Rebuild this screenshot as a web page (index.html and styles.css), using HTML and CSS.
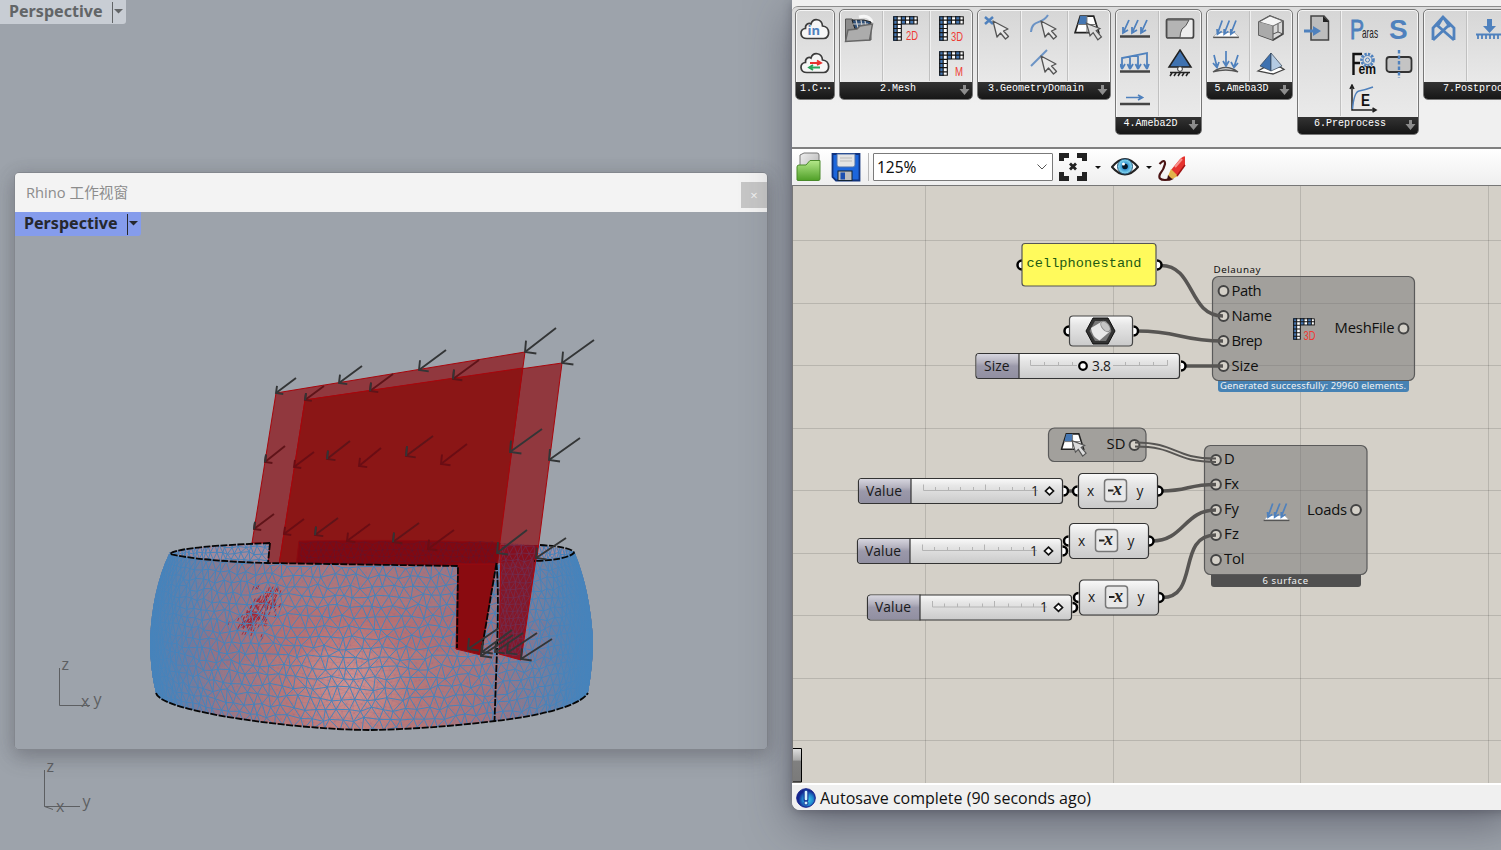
FILE: index.html
```html
<!DOCTYPE html>
<html lang="en">
<head>
<meta charset="utf-8">
<title>Rhino and Grasshopper</title>
<link rel="stylesheet" href="styles.css">
</head>
<body>
<svg class="defs" width="0" height="0">
  <defs>
    <linearGradient id="gBody" x1="0" y1="0" x2="0" y2="1"><stop offset="0" stop-color="#fafafa"/><stop offset=".3" stop-color="#e6e6e6"/><stop offset="1" stop-color="#cacaca"/></linearGradient>
    <linearGradient id="gName" x1="0" y1="0" x2="0" y2="1"><stop offset="0" stop-color="#d6d5de"/><stop offset=".35" stop-color="#b3b1be"/><stop offset=".5" stop-color="#9b99aa"/><stop offset="1" stop-color="#918fa1"/></linearGradient>
    <linearGradient id="gPaper" x1="0" y1="0" x2="1" y2="1"><stop offset="0" stop-color="#eee"/><stop offset="1" stop-color="#aaa"/></linearGradient>
    <linearGradient id="gGreen" x1="0" y1="0" x2="0" y2="1"><stop offset="0" stop-color="#b4e88a"/><stop offset="1" stop-color="#4f9f27"/></linearGradient>
    <radialGradient id="gIris"><stop offset=".2" stop-color="#0b2c4e"/><stop offset=".35" stop-color="#2f8fd0"/><stop offset="1" stop-color="#8fe0f2"/></radialGradient>
    <radialGradient id="gInfo" cx=".6" cy=".6"><stop offset="0" stop-color="#35d0ea"/><stop offset=".55" stop-color="#2288cf"/><stop offset="1" stop-color="#12258f"/></radialGradient>
    <radialGradient id="gShell" gradientUnits="userSpaceOnUse" cx="350" cy="684" r="215"><stop offset="0" stop-color="#d29391"/><stop offset=".3" stop-color="#b97877"/><stop offset=".65" stop-color="#a3747d"/><stop offset="1" stop-color="#7f8097"/></radialGradient>
    <linearGradient id="gSides" x1="0" y1="0" x2="1" y2="0"><stop offset="0" stop-color="#4683bb"/><stop offset=".03" stop-color="#4683bb" stop-opacity=".85"/><stop offset=".14" stop-color="#4683bb" stop-opacity=".2"/><stop offset=".3" stop-color="#4683bb" stop-opacity="0"/><stop offset=".75" stop-color="#4683bb" stop-opacity="0"/><stop offset=".88" stop-color="#4683bb" stop-opacity=".25"/><stop offset=".96" stop-color="#4683bb" stop-opacity=".9"/><stop offset="1" stop-color="#4683bb"/></linearGradient>
    <linearGradient id="gMark" x1="0" y1="0" x2="0" y2="1"><stop offset="0" stop-color="#e0e0e0"/><stop offset=".35" stop-color="#a8a8a8"/><stop offset=".37" stop-color="#808080"/><stop offset="1" stop-color="#7a7a7a"/></linearGradient>

    <symbol id="cursor" viewBox="0 0 18 20"><path d="M1 1L5 17L8.500 13L13.500 19L16.500 16.500L11.500 11L16 9Z" fill="#e9e9e9" stroke="#555" stroke-width="1.300" stroke-linejoin="round"/></symbol>
    <symbol id="meshL" viewBox="0 0 24 24">
      <path d="M0 0H24V8H8V24H0Z" fill="#fff"/>
      <path d="M0 0H4V24H0ZM8 0H12V8H8ZM16 0H20V8H16Z" fill="#4577b3"/>
      <path d="M.7 .7H23.300V7.700H8V23.300H.7ZM4 0V24M8 0V8M12 0V8M16 0V8M20 0V8M0 4H24M0 8H8M0 12H8M0 16H8M0 20H8" fill="none" stroke="#151515" stroke-width="1.100"/>
    </symbol>
    <symbol id="cloud" viewBox="0 0 30 22"><path d="M7 20.500C-1 20.500-.5 10.500 5.500 10.500C5 6 9 4.500 11 6C13-.5 22 .5 22.500 8C30.500 8.500 30.500 20.500 23.500 20.500Z" fill="#f6f6f6" stroke="#3c3c3c" stroke-width="1.700"/></symbol>
    <symbol id="patch" viewBox="0 0 28 26">
      <path d="M6 2H19L24 18H1Z" fill="#fff" stroke="#222" stroke-width="1.600"/><path d="M6 2H12.500V10H4Z" fill="#4577b3"/><path d="M12.500 2V18M3.500 10H21.500" stroke="#777" stroke-width="1"/>
      <path d="M12 9L15.500 21L18.500 18L23 25L26.500 22L21.500 16L25 14Z" fill="#dcdcdc" stroke="#555" stroke-width="1.200"/>
    </symbol>
    <symbol id="surfLoad" viewBox="0 0 30 20"><path d="M6 13.500H23L28 18.500H1Z" fill="#fff" stroke="#999" stroke-width=".8"/><path d="M1 19H28" stroke="#555" stroke-width="1.700"/><path d="M10.500 1L5.500 15M5 10L5.500 15.500L10 12.500M18 1L12.500 15M12.500 10L12.500 15.500L17 12.500M25 1L19.500 15M19.500 10L19.500 15.500L24 12.500" fill="none" stroke="#4f81bd" stroke-width="1.800"/></symbol>
    <symbol id="down" viewBox="0 0 11 12"><path d="M4 1H7V5H10.500L5.500 11L.5 5H4Z" fill="#8c8c8c"/></symbol>

    <g id="portL"><path d="M0 -4.500A4.500 4.500 0 0 0 0 4.500" fill="#fff" stroke="#000" stroke-width="2.500"/></g>
    <g id="portR"><path d="M0 -4.500A4.500 4.500 0 0 1 0 4.500" fill="#fff" stroke="#000" stroke-width="2.500"/></g>
    <circle id="ring" r="4.900" fill="#d4d0c8" stroke="#444" stroke-width="2"/>
    <g id="valueSlider">
      <use href="#portR" x="205.500" y="13"/>
      <rect x=".5" y=".5" width="204" height="25" rx="3" fill="url(#gBody)" stroke="#333" stroke-width="1.200"/>
      <path d="M53 1H4Q1 1 1 4V22Q1 25 4 25H53Z" fill="url(#gName)"/>
      <path d="M53 0V26" stroke="#333" stroke-width="1.200"/>
      <path d="M65.500 6.500V12.500H180M77.500 9V12.500M90.500 9V12.500M102.500 9V12.500M115.500 9V12.500M127.500 6.500V12.500M141.500 9V12.500M154.500 9V12.500M166.500 9V12.500" fill="none" stroke="#b4b4b4"/>
      <text x="8" y="17.500" class="node-text" textLength="36">Value</text>
      <text x="173" y="17.500" class="node-text">1</text>
      <path d="M191.500 9.200L195.500 13L191.500 16.800L187.500 13Z" fill="#fff" stroke="#111" stroke-width="1.700"/>
    </g>
    <g id="negate">
      <use href="#portL" x="-.5" y="18"/><use href="#portR" x="80" y="18"/>
      <rect x=".5" y=".5" width="79" height="35" rx="4" fill="url(#gBody)" stroke="#333" stroke-width="1.200"/>
      <rect x="26.500" y="6.500" width="22" height="22" rx="3" fill="#e8e8e8" stroke="#777" stroke-width="1.500"/>
      <text x="9" y="22.500" class="node-text">x</text><text x="58.500" y="22.500" class="node-text">y</text>
      <path d="M30 17.500H35.500" stroke="#222" stroke-width="2"/><text x="35" y="22" class="neg-x">x</text>
    </g>
  </defs>
</svg>

<div class="desktop">
  <div class="view-tag back-tag"><span class="tag-name">Perspective</span><svg class="tag-arrow" width="14" height="24"><path d="M.5 2V23" stroke="currentColor"/><path d="M2 9H11L6.500 13.500Z" fill="currentColor"/></svg></div>
  <svg class="axes" width="70" height="60" viewBox="35 755 70 60">
    <path d="M44.500 770V806.500L80 806.500M44.500 806.500L53 809.500" fill="none" stroke="#5d5f62"/>
    <text x="46.500" y="772" class="axis">z</text><text x="56" y="811.500" class="axis">x</text><text x="82.500" y="806.500" class="axis">y</text>
  </svg>

  <section class="rhino">
    <header class="rhino-head"><span class="rhino-title">Rhino 工作视窗</span><span class="close">×</span></header>
    <div class="viewport">
      <div class="view-tag live-tag"><span class="tag-name">Perspective</span><svg class="tag-arrow" width="14" height="24"><path d="M.5 2V23" stroke="currentColor"/><path d="M2 9H11L6.500 13.500Z" fill="currentColor"/></svg></div>
      <svg class="scene" viewBox="15 212 752 537" width="752" height="537">
        <defs>
          <clipPath id="frontClip"><path d="M169 554Q200 561 267 563L458 566L456 649L482 655L496 565L499 563Q560 559 575 553Q590 590 593 640Q593 665 588 693C575 713 495 721 495 721Q430 729 370 730C300 730 160 712 156 693Q150 670 150 640Q152 590 169 554Z"/></clipPath>
          <clipPath id="rimClip"><path d="M169 553C180 548 220 545 270 543L268 563Q200 561 169 553ZM299 541Q540 538 575 552Q565 560 499 563L458 566L268 563L299 563Z"/></clipPath>
        </defs>
        <path d="M169 553C180 548 220 545 270 543L268 563Q200 561 169 553ZM299 541Q540 538 575 552Q565 560 499 563L458 566L268 563L299 563Z" fill="#a2899b"/>
        <g clip-path="url(#rimClip)"><path class="mesh" id="rimMesh"/></g>
        <g stroke="#a8060c" stroke-width="1">
          <path d="M252 543L276 393L525 352L496 566H268L270 543Z" fill="#8b0a10" fill-opacity=".7"/>
          <path d="M279 565L305 400L562 363L536 565Z" fill="#8b0a10" fill-opacity=".7"/>
          <path d="M279 565L305 400L522.500 368L497 565Z" fill="#8b1616"/>
        </g>
        <path d="M299 541Q420 539 500 543L497 567H296Z" fill="#820810" stroke="#8c0a10"/>
        <path class="mesh-strip" id="stripMesh"/>
        <g clip-path="url(#frontClip)">
          <rect x="145" y="540" width="455" height="195" fill="url(#gShell)"/>
          <path d="M170 660Q330 600 590 650" fill="none" stroke="#b9424a" stroke-opacity=".1" stroke-width="44"/>
          <path class="mesh-back" id="backMesh"/>
          <path class="streak" id="streak"/>
          <path class="mesh" id="frontMesh"/>
          <rect x="150" y="540" width="443" height="195" fill="url(#gSides)"/>
        </g>
        <path d="M458 564H496L481 655L456 649Z" fill="#8a0b10" stroke="#9b080e"/>
        <path d="M501 545L499 654L521 660L538 545Z" fill="#850c1c" fill-opacity=".9"/>
        <path class="mesh-leg" id="legMesh"/>
        <path d="M501 545L499 654L521 660L538 545" fill="none" stroke="#b0060c"/>
        <g class="edge">
          <path d="M270 543C220 545 175 548 170 554Q200 561 267 563L458 566L457 648M270 543L268 563"/>
          <path d="M540 545Q573 547 574 553Q566 560 534 561"/>
          <path d="M156 693C160 712 300 730 370 730Q430 729 495 721C495 721 575 713 588 693"/>
          <path d="M496.500 563L482 648M496.500 563Q499 590 497 650L494.500 721"/>
        </g>
        <g id="arrows"></g>
        <path d="M59.500 668V705.500H90" fill="none" stroke="#5d5f62"/>
        <text x="61.500" y="670" class="axis">z</text><text x="81" y="706.500" class="axis">x</text><text x="93.500" y="705" class="axis">y</text>
      </svg>
    </div>
  </section>

  <section class="gh">
    <div class="ribbon">
      <div class="group slim">
        <div class="cols"><div class="col">
          <svg class="ico" viewBox="0 0 30 30"><use href="#cloud" x="0" y="4" width="30" height="22"/><text x="7.500" y="21" class="ico-in">in</text></svg>
          <svg class="ico" viewBox="0 0 30 30"><use href="#cloud" x="0" y="3" width="30" height="22"/><path d="M10 14H20M17 11.500L21 14L17 16" stroke="#e8322f" stroke-width="1.800" fill="none"/><path d="M20 18.500H10M13 16L9 18.500L13 21" stroke="#2aa35a" stroke-width="1.800" fill="none"/></svg>
        </div></div>
        <div class="cap"><span>1.C<b class="dots">···</b></span></div>
      </div>
      <div class="group">
        <div class="cols">
          <div class="col c42"><svg class="ico" viewBox="0 0 30 30"><path d="M1.500 26V5H8L10 8H27V26Z" fill="#8c8c8c" stroke="#555"/><path d="M15 3Q25 0 28 8" stroke="#fff" stroke-opacity=".8" stroke-width="3" fill="none"/><path d="M8 6H20L27 8L24 13L11 15Z" fill="#31527a" stroke="#222"/><path d="M12 6L14 14M17 6L18 12M21 7L22 12M9 10H24" stroke="#ccc" stroke-width="1.200"/><path d="M1.500 27.500L4 16L13 15L16 12L28.500 10L25.500 26Z" fill="#acacac" stroke="#666" stroke-width="1.400"/></svg></div>
          <div class="col c47"><svg class="ico" viewBox="0 0 30 30"><use href="#meshL" x="2" y="2" width="25" height="25"/><text x="15" y="26" class="ico-red" textLength="12" lengthAdjust="spacingAndGlyphs">2D</text></svg></div>
          <div class="col">
            <svg class="ico" viewBox="0 0 30 30"><use href="#meshL" x="3" y="2" width="25" height="25"/><text x="15" y="27" class="ico-red" textLength="12" lengthAdjust="spacingAndGlyphs">3D</text></svg>
            <svg class="ico" viewBox="0 0 30 30"><use href="#meshL" x="3" y="2" width="25" height="25"/><text x="19" y="27" class="ico-red" textLength="8" lengthAdjust="spacingAndGlyphs">M</text></svg>
          </div>
        </div>
        <div class="cap"><span>2.Mesh</span><svg class="more"><use href="#down"/></svg></div>
      </div>
      <div class="group">
        <div class="cols">
          <div class="col c42"><svg class="ico" viewBox="0 0 30 30"><path d="M3 3L11 10M11 3L3 10" stroke="#4f81bd" stroke-width="2.500"/><use href="#cursor" x="10" y="6" width="18" height="20"/></svg></div>
          <div class="col c47">
            <svg class="ico" viewBox="0 0 30 30"><path d="M2 18C3 5 13 11 19 1" fill="none" stroke="#6b93c5" stroke-width="2"/><use href="#cursor" x="11" y="6" width="18" height="20"/></svg>
            <svg class="ico" viewBox="0 0 30 30"><path d="M2 17L18 1" stroke="#6b93c5" stroke-width="2"/><use href="#cursor" x="11" y="6" width="18" height="20"/></svg>
          </div>
          <div class="col"><svg class="ico" viewBox="0 0 30 30"><use href="#patch" x="0" y="0" width="29" height="27"/></svg></div>
        </div>
        <div class="cap"><span>3.GeometryDomain</span><svg class="more"><use href="#down"/></svg></div>
      </div>
      <div class="group two">
        <div class="cols">
          <div class="col c42">
            <svg class="ico" viewBox="0 0 30 30"><path d="M0 22.500H30" stroke="#444" stroke-width="2.600"/><path d="M9 6L3.500 18M3 13L3 19L8 16M18 6L12.500 18M12 13L12 19L17 16M27 6L21.500 18M21 13L21 19L26 16" fill="none" stroke="#4f81bd" stroke-width="1.800"/></svg>
            <svg class="ico" viewBox="0 0 30 30"><path d="M0 22.500H30" stroke="#444" stroke-width="2.600"/><path d="M2 20V9L27 4V20M2 20L0 15M2 20L5 15M10 8V20L7.500 15M10 20L13 15M18 6V20L15.500 15M18 20L21 15M27 20L24 15M27 20L29 15" fill="none" stroke="#4f81bd" stroke-width="1.800"/></svg>
            <svg class="ico" viewBox="0 0 30 30"><path d="M0 20H30" stroke="#444" stroke-width="2.600"/><path d="M6 13.500H22M18 11L22.500 13.500L18 16" fill="none" stroke="#4f81bd" stroke-width="1.700"/></svg>
          </div>
          <div class="col">
            <svg class="ico" viewBox="0 0 30 30"><rect x="1.500" y="5" width="27" height="19" rx="2" fill="#eee" stroke="#444" stroke-width="1.700"/><path d="M2 6H24Q21 13 17 15Q15 19 15 23.500H2Z" fill="#b4b4b4" stroke="#555"/></svg>
            <svg class="ico" viewBox="0 0 30 30"><path d="M15 1L26 18H4Z" fill="#3f72b0" stroke="#222" stroke-width="1.500"/><circle cx="15" cy="20" r="2.400" fill="#fff" stroke="#333"/><path d="M5 23.500H25M7 24L5 27M11 24L9 27M15 24L13 27M19 24L17 27M23 24L21 27" stroke="#222" stroke-width="1.500"/></svg>
          </div>
        </div>
        <div class="cap"><span>4.Ameba2D</span><svg class="more"><use href="#down"/></svg></div>
      </div>
      <div class="group two short">
        <div class="cols">
          <div class="col c42">
            <svg class="ico" viewBox="0 0 30 30"><use href="#surfLoad" x="1" y="5.500" width="29" height="19"/></svg>
            <svg class="ico" viewBox="0 0 30 30"><path d="M2 23Q15 14 27 23Q15 19 2 23Z" fill="#eee" stroke="#555" stroke-width="1.300"/><path d="M15 2V17M12 12L15 17L18 12M3 6L6 18M2 14L6 18.500L8 13M27 6L23 18M20 13L23 18.500L27 14" fill="none" stroke="#4f81bd" stroke-width="1.700"/></svg>
          </div>
          <div class="col">
            <svg class="ico" viewBox="0 0 30 30"><path d="M14 2L27 7V20L17 26L3 21V8Z" fill="#d8d8d8" stroke="#444" stroke-width="1.600"/><path d="M3 8L17 12L27 7L14 2Z" fill="#f5f5f5" stroke="#666"/><path d="M3 8L17 12V26L3 21Z" fill="#aaa"/><path d="M17 12V26M22 10V18L17 20M22 18L27 20" fill="none" stroke="#555"/></svg>
            <svg class="ico" viewBox="0 0 30 30"><path d="M2 22L9 18H24L28 20.500L17 25Z" fill="#fff" stroke="#444" stroke-width="1.300"/><path d="M15 4V22L4 17Z" fill="#3f72b0" stroke="#345" stroke-width=".7"/><path d="M15 4V22L26 17Z" fill="#b4cbe3" stroke="#345" stroke-width=".7"/></svg>
          </div>
        </div>
        <div class="cap"><span>5.Ameba3D</span><svg class="more"><use href="#down"/></svg></div>
      </div>
      <div class="group prep">
        <div class="cols">
          <div class="col first c42"><svg class="ico" viewBox="0 0 30 30"><path d="M9 2H22L26.500 7V26H9Z" fill="#bdbdbd" stroke="#444" stroke-width="1.500"/><path d="M21 2V8H27Z" fill="#222"/><path d="M2 15.500H11V12L19 17L11 22V18.500H2Z" fill="#4f81bd"/></svg></div>
          <div class="col pair">
            <svg class="ico" viewBox="0 0 30 30"><text x="1" y="25" class="ico-p" textLength="14" lengthAdjust="spacingAndGlyphs">P</text><text x="13" y="24" class="ico-cond" textLength="16" lengthAdjust="spacingAndGlyphs">aras</text></svg>
            <svg class="ico" viewBox="0 0 30 30"><text x="5" y="25" class="ico-s">S</text></svg>
            <svg class="ico" viewBox="0 0 30 30"><path d="M4.500 26V5H13M4.500 14H11" fill="none" stroke="#111" stroke-width="2.400"/><circle cx="18.500" cy="11" r="6" fill="none" stroke="#4f81bd" stroke-width="2.600" stroke-dasharray="2.300 1.200"/><circle cx="18.500" cy="11" r="4.500" fill="none" stroke="#4f81bd"/><circle cx="18.500" cy="11" r="2" fill="none" stroke="#4f81bd"/><text x="9.500" y="25" class="ico-em" textLength="17.500" lengthAdjust="spacingAndGlyphs">em</text></svg>
            <svg class="ico" viewBox="0 0 30 30"><rect x="2.500" y="8" width="25" height="15" rx="3" fill="#c4c4c4" stroke="#333" stroke-width="1.800"/><path d="M15 1V29" stroke="#4f81bd" stroke-width="2.400" stroke-dasharray="3.500 2"/></svg>
            <svg class="ico" viewBox="0 0 30 30"><path d="M3 2V26H26M1 5L3 1L5 5M23.500 24L27 26L23.500 28" fill="none" stroke="#222" stroke-width="1.500"/><path d="M3.500 25Q5 8 10 7Q16 6 24 3" fill="none" stroke="#4f81bd" stroke-width="1.500"/><text x="12" y="22" class="ico-e" textLength="9" lengthAdjust="spacingAndGlyphs">E</text></svg>
          </div>
        </div>
        <div class="cap"><span>6.Preprocess</span><svg class="more"><use href="#down"/></svg></div>
      </div>
      <div class="group post">
        <div class="cols">
          <div class="col c42"><svg class="ico" viewBox="0 0 30 30"><path d="M5 26V14L15 3L26 14V26M5 26L20 12M26 26L10 12M15 3L9 13M15 3L22 13" fill="none" stroke="#4f81bd" stroke-width="2.800"/></svg></div>
          <div class="col c47"><svg class="ico" viewBox="0 0 30 30"><path d="M12 5H17V12H21L14.500 19L8 12H12Z" fill="#4f81bd"/><path d="M1 20.500H29M3 21V25M7 21V25M11 21V25M15 21V25M19 21V25M23 21V25M27 21V25" stroke="#4f81bd" stroke-width="1.800"/></svg></div>
          <div class="col"></div>
        </div>
        <div class="cap"><span>7.Postprocess</span></div>
      </div>
    </div>

    <div class="toolbar">
      <svg class="tool" width="28" height="32" viewBox="0 0 28 32"><path d="M4 30V4L8 2H21Q23 2 23 4V20" fill="url(#gPaper)" stroke="#777"/><path d="M1 29V16Q1 14 3 14H10L14 9.500H24V28Q24 29.500 22 29.500H2Z" fill="url(#gGreen)" stroke="#4a8a2a"/></svg>
      <svg class="tool save" width="30" height="32" viewBox="0 0 30 32"><path d="M1.500 3H28.500V29.500H5L1.500 26Z" fill="#1c66dc" stroke="#10337e" stroke-width="1.800"/><path d="M6 3H24V14Q24 16 22 16H8Q6 16 6 14Z" fill="#e4e4e4" stroke="#4a6fa9"/><path d="M9 7H21M9 10H21" stroke="#bbb"/><rect x="7" y="20" width="14" height="9.500" fill="#bcbcbc" stroke="#123"/><rect x="9.500" y="21.500" width="4.500" height="7" fill="#1c4fb0"/></svg>
      <span class="sep"></span>
      <div class="zoombox"><span>125%</span><svg width="12" height="8"><path d="M1.500 1.500L6 6L10.500 1.500" fill="none" stroke="#555"/></svg></div>
      <svg class="tool fit" width="30" height="32" viewBox="0 0 30 32"><path d="M3.500 10V4.500H11M19 4.500H26.500V10M26.500 21V27.500H19M11 27.500H3.500V21" fill="none" stroke="#222" stroke-width="5"/><path d="M12 12.500L18 18.500M18 12.500L12 18.500" stroke="#222" stroke-width="2.800"/></svg>
      <span class="drop"></span>
      <svg class="tool eye" width="28" height="32" viewBox="0 0 28 32"><path d="M1 16Q14 0 27 16Q14 31 1 16Z" fill="#fff" stroke="#222" stroke-width="2"/><circle cx="14" cy="15.500" r="7.500" fill="url(#gIris)" stroke="#25557a"/><circle cx="14" cy="15.500" r="2.800" fill="#061626"/><circle cx="12.500" cy="13" r="1.500" fill="#fff"/></svg>
      <span class="drop"></span>
      <svg class="tool pen" width="30" height="32" viewBox="0 0 30 32"><path d="M1.500 13Q7 7 7 13Q6 18 2 23Q-.5 29 7 29Q12 29 15 27" fill="none" stroke="#4a1414" stroke-width="2.200"/><path d="M13 19L22 8Q27 4 27 6V14L19 25Z" fill="#e5332f"/><path d="M13 18L20 25L14 28L10 25Z" fill="#e2b34a"/><path d="M17 16L24 8" stroke="#f9918c" stroke-width="2"/><path d="M27 14L19 25" stroke="#9f1414" stroke-width="1.500"/><path d="M10 24L9 29L14 28Z" fill="#3a1010"/></svg>
    </div>

    <svg class="canvas" viewBox="793 186 708 597" width="708" height="597">
      <rect x="793" y="186" width="708" height="597" fill="#d4d0c8"/>
      <path d="M793 748.500H801.500V782H793" fill="url(#gMark)" stroke="#000"/>
      <path class="grid" d="M925.500 186V783M1113.500 186V783M1300.500 186V783M1488.500 186V783M793 240.500H1501M793 303.500H1501M793 365.500H1501M793 428.500H1501M793 490.500H1501M793 553.500H1501M793 615.500H1501M793 678.500H1501M793 740.500H1501"/>
      <g class="comp">
        <rect x="1212.500" y="276.500" width="202" height="104" rx="6"/>
        <rect x="1048.500" y="428" width="97.500" height="33.500" rx="6"/>
        <rect x="1204.500" y="445.500" width="162.500" height="129" rx="6"/>
      </g>
      <path d="M1218 381H1409V389Q1409 392 1406 392H1221Q1218 392 1218 389Z" fill="#4682b4"/>
      <path d="M1211 575H1361V584Q1361 587 1358 587H1214Q1211 587 1211 584Z" fill="#505050"/>
      <g>
        <use href="#ring" x="1223.500" y="291"/><use href="#ring" x="1223.500" y="316"/><use href="#ring" x="1223.500" y="341"/><use href="#ring" x="1223.500" y="366"/><use href="#ring" x="1403.500" y="328.500"/>
        <use href="#ring" x="1216" y="460"/><use href="#ring" x="1216" y="484.500"/><use href="#ring" x="1216" y="510"/><use href="#ring" x="1216" y="535"/><use href="#ring" x="1216" y="560"/><use href="#ring" x="1356" y="510"/><use href="#ring" x="1134.500" y="445"/>
      </g>
      <g class="wire">
        <path d="M1161 265.500C1195 265.500 1188 316 1223 316M1137 331C1180 331 1180 341 1223 341M1184 366H1223"/>
        <path d="M1066 491H1076M1161 491C1190 491 1186 484.500 1216 484.500M1152 541C1184 541 1184 510 1216 510M1162 597.500C1200 597.500 1176 535 1216 535"/>
        <path class="thin" d="M1135 442.500C1178 442.500 1172 458.500 1216 458.500M1135 446.500C1178 446.500 1172 462 1216 462"/>
      </g>
      <use href="#portL" x="1022" y="265"/><use href="#portR" x="1157" y="265"/>
      <rect x="1022" y="243.500" width="134" height="42.500" rx="3" fill="#fffa5c" stroke="#555" stroke-width="1.200"/>
      <text x="1026.500" y="267" class="panel-text" textLength="115">cellphonestand</text>
      <use href="#portL" x="1069" y="331"/><use href="#portR" x="1133.500" y="331"/>
      <rect x="1069.500" y="316" width="63" height="30" rx="3.500" fill="url(#gBody)" stroke="#444" stroke-width="1.200"/>
      <path d="M1093 318H1108L1115 331L1108 344H1093L1086 331Z" fill="#333" stroke="#111"/><path d="M1095 321H1106L1111.500 331L1106 341H1095L1089.500 331Z" fill="#777"/><path d="M1091 328L1102 321.500L1110.500 331L1099.500 340.500Q1092 337 1091 328Z" fill="#e8e8e8"/><ellipse cx="1105.500" cy="326.500" rx="3.500" ry="6" fill="#c4c4c4" stroke="#8a8a8a" transform="rotate(-40 1105.500 326.500)"/>

      <use href="#portR" x="1181" y="366"/>
      <rect x="976" y="353.500" width="203.500" height="25" rx="3" fill="url(#gBody)" stroke="#333" stroke-width="1.200"/>
      <path d="M1019 354H979Q976.500 354 976.500 357V375Q976.500 378 979 378H1019Z" fill="url(#gName)"/><path d="M1019 353.500V378.500" stroke="#333" stroke-width="1.200"/>
      <path d="M1030.500 360V365.500H1077M1044.500 362V365.500M1058.500 362V365.500M1072.500 362V365.500M1113 365.500H1167.500V360M1125.500 362V365.500M1139.500 362V365.500M1153.500 362V365.500" fill="none" stroke="#b4b4b4"/>
      <circle cx="1083" cy="366" r="3.800" fill="#fff" stroke="#000" stroke-width="2.200"/>
      <text x="984" y="370.500" class="node-text" textLength="25.500">Size</text><text x="1092" y="370.500" class="node-text" textLength="19">3.8</text>

      <use href="#valueSlider" x="858" y="478"/><use href="#valueSlider" x="857" y="538"/><use href="#valueSlider" x="867" y="594.500"/>
      <use href="#negate" x="1078" y="473"/><use href="#negate" x="1069" y="523"/><use href="#negate" x="1079" y="579.500"/>

      <text x="1213.500" y="273" class="tiny" textLength="47">Delaunay</text>
      <g class="port-text">
        <text x="1231.500" y="295.500" textLength="30">Path</text><text x="1231.500" y="320.500" textLength="40.500">Name</text><text x="1231.500" y="345.500" textLength="31">Brep</text><text x="1231.500" y="370.500" textLength="27">Size</text><text x="1334.500" y="333" textLength="60">MeshFile</text>
        <text x="1106.500" y="449" textLength="19">SD</text>
        <text x="1224" y="464">D</text><text x="1224" y="489" textLength="15">Fx</text><text x="1224" y="514" textLength="15">Fy</text><text x="1224" y="539" textLength="15">Fz</text><text x="1224" y="564" textLength="20.500">Tol</text><text x="1307" y="514.500" textLength="40">Loads</text>
      </g>
      <text x="1220" y="389" class="bar-text" textLength="186">Generated successfully: 29960 elements.</text>
      <text x="1262.500" y="583.500" class="bar-text" textLength="45.500">6 surface</text>
      <use href="#meshL" x="1293" y="318" width="22" height="22"/><text x="1303.500" y="340" class="ico-red" textLength="12" lengthAdjust="spacingAndGlyphs">3D</text>
      <use href="#patch" x="1060.500" y="431.500" width="27" height="26"/>
      <use href="#surfLoad" x="1262.500" y="502.500" width="29" height="19"/>
    </svg>

    <footer class="status"><svg width="20" height="20" viewBox="0 0 20 20"><circle cx="10" cy="10" r="9.300" fill="url(#gInfo)" stroke="#16218a"/><path d="M10 3.500V11.500" stroke="#173a9a" stroke-width="5" stroke-linecap="round"/><path d="M10 4V11" stroke="#d4f2fa" stroke-width="2.600" stroke-linecap="round"/><circle cx="10" cy="15" r="2" fill="#d4f2fa" stroke="#173a9a"/></svg><span class="status-text">Autosave complete (90 seconds ago)</span></footer>
  </section>
</div>
<script src="scene.js"></script>
</body>
</html>
```
FILE: styles.css
```css
* { box-sizing: border-box; }
body { margin: 0; font-family: "Open Sans", "Noto Sans", "Noto Sans CJK SC", sans-serif; overflow: hidden; }
.defs { position: absolute; }
.desktop { position: relative; width: 1501px; height: 850px; overflow: hidden; background: #9da3ab; }

.view-tag { display: flex; align-items: flex-start; width: 126px; height: 24px; padding-left: 9px; border-bottom-right-radius: 3px; }
.tag-name { width: 103px; font: 700 16.100px/22px "Noto Sans", sans-serif; }
.tag-arrow { flex: none; }
.back-tag { background: #c8cdd4; color: #626567; }
.live-tag { position: absolute; left: 0; top: 0; background: #859cec; color: #26282e; }
.axes { position: absolute; left: 35px; top: 755px; }
.axis { font: 16px "Open Sans", sans-serif; fill: #5d5f62; }

.rhino { position: absolute; left: 14px; top: 172px; width: 754px; height: 578px; display: flex; flex-direction: column; border: 1px solid #83878e; border-radius: 5px; overflow: hidden; box-shadow: 0 8px 20px rgba(70, 70, 80, .3), 0 2px 18px rgba(70, 70, 80, .18); }
.rhino-head { flex: none; display: flex; justify-content: space-between; height: 39px; background: #f3f3f3; }
.rhino-title { padding: 9px 0 0 11px; font-size: 14.700px; line-height: 20px; color: #8c8c8c; }
.close { width: 26px; height: 26px; margin-top: 9px; background: #c6c6c6; color: #f2f2f2; font-size: 13px; line-height: 26px; text-align: center; }
.viewport { position: relative; flex: 1; background: #9da3ab; }
.scene { display: block; }
.mesh { fill: none; stroke: #4683bb; stroke-width: 1; }
.mesh-back { fill: none; stroke: #a0708c; stroke-width: .6; opacity: .45; }
.mesh-leg { fill: none; stroke: #6d3358; stroke-width: .8; opacity: .8; }
.mesh-strip { fill: none; stroke: #5e1630; stroke-width: .7; opacity: .7; }
.streak { fill: none; stroke: #a81c2a; stroke-width: .9; }
.edge { fill: none; stroke: #060606; stroke-width: 1.800; stroke-dasharray: 7 1.500; }
.arrow { fill: none; stroke: #333536; stroke-width: 1.900; }
.arrow.inside { stroke: #6a0d14; }
.arrow.mixed { stroke: #5f1419; }

.gh { position: absolute; left: 792px; top: 0; width: 720px; height: 810px; display: flex; flex-direction: column; background: #f0f0f0; border-bottom-left-radius: 8px; box-shadow: 0 14px 45px rgba(50, 50, 65, .5), 0 2px 10px rgba(50, 50, 60, .35); overflow: hidden; }
.ribbon { flex: none; display: flex; align-items: flex-start; gap: 4px; height: 143px; margin-top: 6px; padding: 2px 0 0 3px; border: solid #8c8c8c; border-width: 1px 0 0; border-top-left-radius: 6px; background: linear-gradient(#dcdcdc, #f0f0f0 70%); border-bottom: 2px solid #808080; }
.group { flex: none; display: flex; flex-direction: column; width: 134px; border: 1px solid #777; border-radius: 5px; overflow: hidden; background: linear-gradient(#d6d6d6, #ededed); box-shadow: inset 0 0 0 1px #f6f6f6; }
.slim { width: 40px; }
.two { width: 87px; }
.prep { width: 122px; }
.cols { display: flex; height: 72px; padding: 1px; }
.group.two .cols, .group.prep .cols { height: 107px; }
.group.short .cols { height: 72px; }
.col { flex: 1; display: flex; flex-direction: column; align-items: center; gap: 5px; padding-top: 3px; }
.col + .col { border-left: 1px solid #c0c0c0; box-shadow: inset 1px 0 #f0f0f0; }
.col.c42 { flex: 0 0 41px; padding-right: 6px; }
.col.c47 { flex: 0 0 47px; }
.col.pair { flex-flow: row wrap; align-content: flex-start; padding-left: 8px; }
.ico { flex: none; width: 30px; height: 30px; display: block; }
.cap { display: flex; justify-content: center; position: relative; height: 17px; background: linear-gradient(#333, #161616); color: #fff; font: 10px/14px "Liberation Mono", monospace; white-space: nowrap; }
.cap span { padding-right: 16px; }
.slim .cap span { padding: 0; }
.dots { font-weight: 700; letter-spacing: -2px; }
.more { position: absolute; right: 2px; top: 2px; width: 11px; height: 12px; }
.ico-red { font: 12.500px "Liberation Sans", sans-serif; fill: #ee3a33; }
.ico-in { font: 700 13px "Open Sans", sans-serif; fill: #4f81bd; }
.ico-p { font: 28px "Liberation Sans", sans-serif; fill: #4f81bd; stroke: #4f81bd; stroke-width: .8px; }
.ico-s { font: 700 28px "Liberation Sans", sans-serif; fill: #4f81bd; }
.ico-cond { font: 15px "Liberation Sans", sans-serif; fill: #222; }
.ico-em { font: 700 14px "Liberation Sans", sans-serif; fill: #111; }
.ico-e { font: 700 17px "Liberation Sans", sans-serif; fill: #111; }

.toolbar { flex: none; display: flex; align-items: center; height: 37px; padding: 0 0 2px 4px; background: linear-gradient(#fff, #eee); }
.tool { flex: none; }
.save { margin-left: 7px; }
.sep { width: 1px; height: 28px; margin: 0 4px 0 7px; background: #b8b8b8; }
.zoombox { display: flex; justify-content: space-between; align-items: center; width: 180px; height: 28px; padding: 0 4px 0 3px; background: #fff; border: 1px solid #7a7a7a; border-radius: 1px; font: 15.500px "Noto Sans", sans-serif; color: #111; }
.fit { margin-left: 5px; }
.drop { margin: 2px 7px 0; border: 3px solid transparent; border-top-color: #111; border-bottom-width: 0; width: 6px; }
.eye { margin: 0 0 0 3px; }
.pen { margin-left: -1px; }
.canvas { flex: none; display: block; margin-left: 1px; border: 0; outline: 1px solid #777; }
.status { flex: 1; display: flex; align-items: center; gap: 4px; padding: 1px 0 0 4px; border-top: 2px solid #fff; background: #f0f0f0; position: relative; }
.status-text { font: 16px/20px "Open Sans", sans-serif; color: #111; }

.grid { fill: none; stroke: #000; stroke-opacity: .13; }
.comp rect { fill: #707070; fill-opacity: .5; stroke: #5a5a5a; stroke-width: 1.200; }
.wire { fill: none; stroke: #575553; stroke-width: 3.600; }
.wire .thin { stroke-width: 2; }
.node-text { font: 13.800px "Open Sans", sans-serif; fill: #1a1a1a; }
.port-text { font: 14.800px "Open Sans", sans-serif; fill: #101010; }
.tiny { font: 9.800px "Noto Sans", sans-serif; fill: #111; }
.bar-text { font: 9.500px "Noto Sans", sans-serif; fill: #f2f2f2; }
.panel-text { font: 13.600px "Liberation Mono", monospace; fill: #1d5a12; }
.neg-x { font: italic 700 18px "Liberation Serif", serif; fill: #222; }
```
FILE: scene.js
```js
// Repeatable pseudo-random numbers, so the mesh is the same on every load.
let seed = 11;
function rnd() {
  seed = (seed * 16807) % 2147483647;
  return seed / 2147483647 - 0.5;
}

// Maps angle and height on the barrel to screen coordinates.
function barrel(theta, v) {
  const r = 203 + 13 * v + 44 * v * (1 - v);
  const x = 371.5 + r * Math.sin(theta);
  const c = Math.cos(theta);
  return [x, (553 + 13 * c) * (1 - v) + (693 + 37 * c) * v];
}

// Jittered triangle grid joined into one path.
function triangles(cols, rows, place, jitter) {
  const pts = [];
  for (let j = 0; j <= rows; j++) {
    pts.push([]);
    for (let i = 0; i <= cols; i++) {
      const a = (i + (j % 2) / 2 + rnd() * jitter) / cols;
      pts[j].push(place(a, (j + rnd() * jitter) / rows));
    }
  }
  let d = "";
  const line = (a, b) => {
    d += "M" + a[0].toFixed(1) + " " + a[1].toFixed(1) + "L" + b[0].toFixed(1) + " " + b[1].toFixed(1);
  };
  for (let j = 0; j <= rows; j++) {
    for (let i = 0; i <= cols; i++) {
      if (i < cols) line(pts[j][i], pts[j][i + 1]);
      if (j < rows) {
        line(pts[j][i], pts[j + 1][i]);
        const k = j % 2 ? i + 1 : i - 1;
        if (k >= 0 && k <= cols) line(pts[j][i], pts[j + 1][k]);
      }
    }
  }
  return d;
}

const put = (id, d) => document.getElementById(id).setAttribute("d", d);
put("frontMesh", triangles(60, 16, (a, v) => barrel((a - 0.5) * Math.PI, v), 0.5));
put("backMesh", triangles(90, 27, (a, v) => barrel((a - 0.5) * Math.PI, v), 0.7));
put("rimMesh", triangles(75, 4, (a, v) => [371.5 + 204 * Math.sin((a - 0.5) * Math.PI), 539 + 28 * v], 0.5));
put("stripMesh", triangles(32, 3, (a, v) => [300 + 192 * a, 543 + 20 * v], 0.5));
put("legMesh", triangles(5, 15, (a, v) => [501 + 32 * a - v * (2 + 12 * a), 546 + 108 * v], 0.4));

let streak = "";
for (let i = 0; i < 190; i++) {
  const t = rnd();
  const x = 257 + t * 26 + (rnd() + rnd()) * 17;
  const y = 613 - t * 36 + (rnd() + rnd()) * 15;
  streak += `M${x.toFixed(1)} ${y.toFixed(1)}l${(1.5 + rnd()).toFixed(1)} ${(-3.5 + rnd()).toFixed(1)}`;
}
put("streak", streak);

// Load arrows: tail x, tail y, tip x, tip y, style.
const arrows = [
  [296, 378, 276, 393], [362, 366, 339, 383], [446, 350, 419, 370], [556, 328, 525, 352], [594, 340, 562, 363],
  [324, 386, 305, 400, "mixed"], [393, 374, 370, 391, "mixed"], [479, 360, 453, 379, "mixed"],
  [285, 446, 265, 462, "mixed"], [314, 452, 294, 467, "inside"], [350, 441, 327, 459, "mixed"],
  [381, 448, 359, 466, "inside"], [433, 436, 406, 456, "mixed"], [467, 444, 441, 464, "inside"],
  [542, 429, 510, 452], [580, 438, 549, 460], [274, 514, 254, 529, "mixed"], [304, 519, 284, 534, "inside"],
  [338, 518, 315, 535, "mixed"], [370, 524, 347, 541, "inside"], [419, 523, 393, 542, "mixed"],
  [454, 530, 428, 549, "inside"], [527, 530, 497, 553], [566, 538, 536, 558],
  [499, 628, 468, 649], [512, 630, 482, 652], [523, 633, 495, 652], [513, 635, 481, 656],
  [537, 633, 507, 653], [552, 639, 521, 659]
];
const svgNs = "http://www.w3.org/2000/svg";
for (const [x1, y1, x2, y2, kind] of arrows) {
  const s = Math.hypot(x1 - x2, y1 - y2) / 38;
  const p = document.createElementNS(svgNs, "path");
  p.setAttribute("class", kind ? "arrow " + kind : "arrow");
  p.setAttribute("d", `M${x1} ${y1}L${x2} ${y2}M${x2 + 1} ${y2 - 11 * s}L${x2} ${y2}L${x2 + 11 * s} ${y2 + 1.5 * s}`);
  document.getElementById("arrows").append(p);
  if (kind === "mixed") {
    const q = document.createElementNS(svgNs, "path");
    q.setAttribute("class", "arrow");
    q.setAttribute("d", `M${x2 + 1} ${y2 - 11 * s}L${x2} ${y2}`);
    document.getElementById("arrows").append(q);
  }
}
```
